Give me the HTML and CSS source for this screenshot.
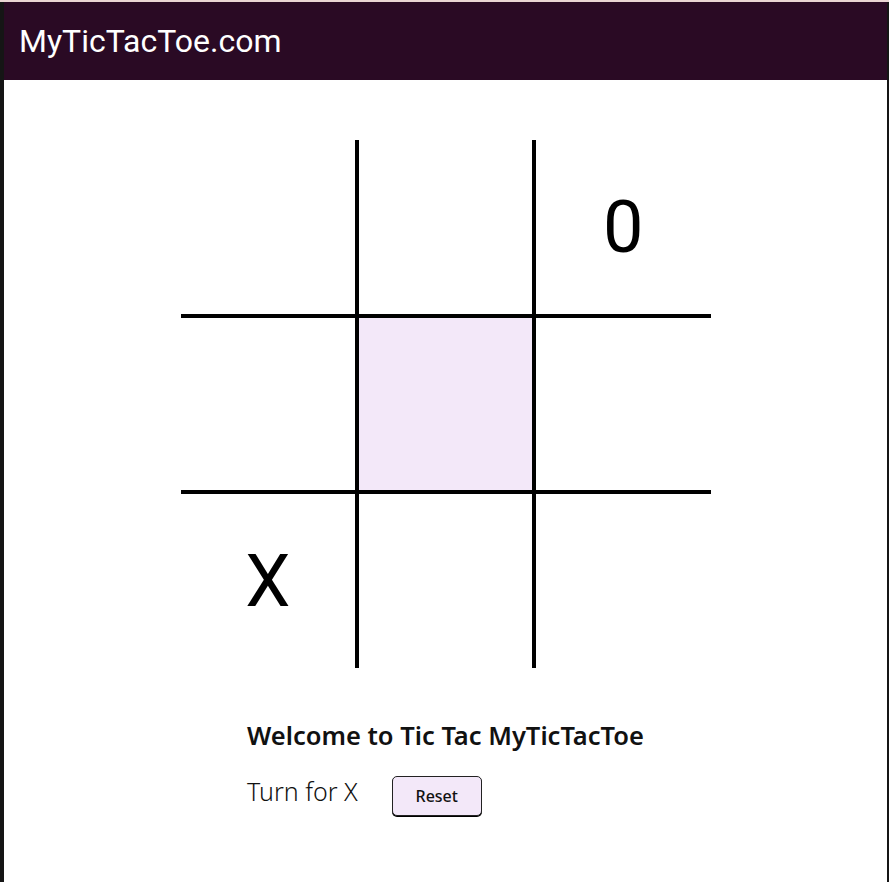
FILE: index.html
```html
<!DOCTYPE html>
<html lang="en">
<head>
<meta charset="utf-8">
<title>MyTicTacToe.com</title>
<link rel="stylesheet" href="styles.css">
</head>
<body>
<div class="topline"></div>
<div class="frame">
  <header class="header">MyTicTacToe.com</header>
  <main class="main">
    <div class="board">
      <div class="cell"></div>
      <div class="cell"></div>
      <div class="cell">0</div>
      <div class="cell"></div>
      <div class="cell cell-active"></div>
      <div class="cell"></div>
      <div class="cell">X</div>
      <div class="cell"></div>
      <div class="cell"></div>
    </div>
    <div class="info">
      <h2 class="title">Welcome to Tic Tac MyTicTacToe</h2>
      <div class="turn-row">
        <span class="turn">Turn for X</span>
        <button class="reset">Reset</button>
      </div>
    </div>
  </main>
</div>
</body>
</html>
```
FILE: styles.css
```css
html, body {
  margin: 0;
  padding: 0;
}
body {
  background: #151515;
  height: 882px;
  overflow: hidden;
}
.topline {
  height: 2px;
  background: #ead5d3;
}
.frame {
  margin: 0 2px 0 4px;
  background: #ffffff;
  height: 880px;
}
.header {
  height: 78px;
  background: #2a0a24;
  color: #ffffff;
  font-family: Roboto, "Liberation Sans", sans-serif;
  font-size: 32px;
  display: flex;
  align-items: center;
  padding-left: 15px;
}
.main {
  display: flex;
  flex-direction: column;
  align-items: center;
}
.board {
  margin-top: 60px;
  width: 530px;
  display: grid;
  grid-template-columns: repeat(3, 1fr);
  grid-template-rows: repeat(3, 176px);
}
.cell {
  box-sizing: border-box;
  border: 2px solid #000;
  display: flex;
  align-items: center;
  justify-content: center;
  font-family: Roboto, "Liberation Sans", sans-serif;
  font-size: 72px;
  color: #000;
}
.cell:nth-child(-n+3) { border-top: none; }
.cell:nth-child(n+7) { border-bottom: none; }
.cell:nth-child(3n+1) { border-left: none; }
.cell:nth-child(3n) { border-right: none; }
.cell-active {
  background: #f3e8f9;
}
.info {
  margin-top: 52px;
  font-family: "Noto Sans", "Open Sans", sans-serif;
  color: #111;
}
.title {
  margin: 0;
  font-size: 25.5px;
  font-weight: 600;
  line-height: 30px;
}
.turn-row {
  margin-top: 26px;
  display: flex;
  align-items: center;
  gap: 34px;
}
.turn {
  font-size: 25px;
  font-weight: 300;
  line-height: 30px;
  margin-bottom: 10px;
}
.reset {
  width: 90px;
  height: 40px;
  background: #f3e8f9;
  border: 1.5px solid #222;
  border-radius: 5px;
  box-shadow: 0 1px 0 #000;
  font-family: "Noto Sans", "Open Sans", sans-serif;
  font-size: 16px;
  font-weight: 500;
  color: #111;
  padding: 0;
}
```
